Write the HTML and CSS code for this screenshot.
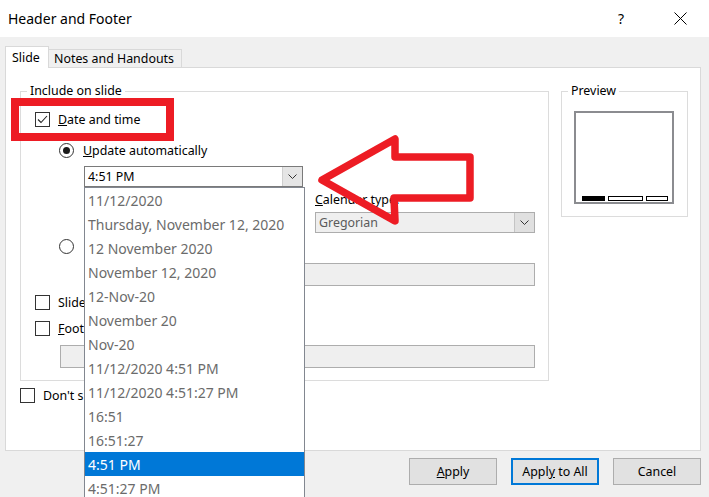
FILE: index.html
```html
<!DOCTYPE html>
<html>
    <head>
        <title>Header and Footer</title>
        <link rel="stylesheet" href="styles.css">
    </head>
    <body>
        <div class="titlebar">
            <span class="title">Header and Footer</span>
            <span class="title-btn">?</span>
            <span class="title-btn close">
                <svg width="13" height="13" viewBox="0 0 13 13"><path d="M0.5 0.5 L12.5 12.5 M12.5 0.5 L0.5 12.5" stroke="#000" stroke-width="1" fill="none"/></svg>
            </span>
        </div>

        <div class="tabs">
            <div class="tab active">Slide</div>
            <div class="tab">Notes and Handouts</div>
        </div>

        <div class="panel">
            <div class="panel-row">
                <fieldset class="group include">
                    <legend>Include on slide</legend>
                    <div class="group-body">
                        <div class="row row-dt">
                            <span class="checkbox"><svg width="13" height="13" viewBox="0 0 13 13"><path d="M2 6.5 L5 9.5 L11 3" stroke="#222" stroke-width="1.1" fill="none"/></svg></span>
                            <span class="label"><u>D</u>ate and time</span>
                        </div>
                        <div class="row row-ua indent">
                            <span class="radio on"></span>
                            <span class="label"><u>U</u>pdate automatically</span>
                        </div>
                        <div class="combo date-combo">
                            <span class="combo-text">4:51 PM</span>
                            <span class="combo-btn"><svg width="9" height="5" viewBox="0 0 9 5"><path d="M0.5 0.5 L4.5 4.5 L8.5 0.5" stroke="#333" fill="none"/></svg></span>
                            <ul class="dropdown">
                                <li>11/12/2020</li>
                                <li>Thursday, November 12, 2020</li>
                                <li>12 November 2020</li>
                                <li>November 12, 2020</li>
                                <li>12-Nov-20</li>
                                <li>November 20</li>
                                <li>Nov-20</li>
                                <li>11/12/2020 4:51 PM</li>
                                <li>11/12/2020 4:51:27 PM</li>
                                <li>16:51</li>
                                <li>16:51:27</li>
                                <li class="selected">4:51 PM</li>
                                <li>4:51:27 PM</li>
                            </ul>
                        </div>
                        <div class="lang-cal">
                            <div class="field-label"></div>
                            <div class="field-label"><u>C</u>alendar type:</div>
                            <div class="combo disabled">
                                <span class="combo-text"></span>
                                <span class="combo-btn"></span>
                            </div>
                            <div class="combo disabled">
                                <span class="combo-text">Gregorian</span>
                                <span class="combo-btn"><svg width="9" height="5" viewBox="0 0 9 5"><path d="M0.5 0.5 L4.5 4.5 L8.5 0.5" stroke="#333" fill="none"/></svg></span>
                            </div>
                        </div>
                        <div class="row row-fixed indent">
                            <span class="radio"></span>
                        </div>
                        <div class="textbox fixed-box"></div>
                        <div class="row row-sn">
                            <span class="checkbox"></span>
                            <span class="label">Slide</span>
                        </div>
                        <div class="row row-ft">
                            <span class="checkbox"></span>
                            <span class="label"><u>F</u>oot</span>
                        </div>
                        <div class="textbox footer-box"></div>
                    </div>
                </fieldset>

                <fieldset class="group preview">
                    <legend>Preview</legend>
                    <div class="thumb">
                        <span class="bar filled"></span>
                        <span class="bar wide"></span>
                        <span class="bar"></span>
                    </div>
                </fieldset>
            </div>

            <div class="row row-ds">
                <span class="checkbox"></span>
                <span class="label">Don't s</span>
            </div>
        </div>

        <div class="buttons">
            <button type="button" class="btn"><u>A</u>pply</button>
            <button type="button" class="btn default">Appl<u>y</u> to All</button>
            <button type="button" class="btn">Cancel</button>
        </div>

        <!-- annotations drawn over the dialog -->
        <div class="red-box"></div>
        <svg class="arrow" width="709" height="497" viewBox="0 0 709 497">
            <polygon points="322,180 395,139 395,157 470,157 470,198 394,198 395,221" fill="none" stroke="#ed1c24" stroke-width="7.5" stroke-linejoin="round"/>
        </svg>
    </body>
</html>
```

FILE: styles.css
```css
* {
    box-sizing: border-box;
}

body {
    margin: 0;
    width: 709px;
    height: 497px;
    overflow: hidden;
    position: relative;
    background: #f0f0f0;
    font-family: "Noto Sans", "Open Sans", sans-serif;
    font-size: 12.4px;
    color: #000;
}

.titlebar {
    height: 37px;
    background: #fff;
    display: flex;
    align-items: center;
    padding-left: 8px;
}
.title {
    flex: 1;
    font-size: 14px;
}
.title-btn {
    width: 20px;
    text-align: center;
    font-size: 14px;
    margin-right: 39px;
}
.title-btn.close {
    margin-right: 19px;
    display: flex;
    justify-content: center;
}

.tabs {
    display: flex;
    align-items: flex-end;
    height: 21px;
    margin: 9px 0 0 5px;
    position: relative;
    z-index: 1;
}
.tab {
    height: 18px;
    width: 133px;
    padding-left: 5px;
    line-height: 17px;
    background: #f0f0f0;
    border: 1px solid #d9d9d9;
    border-left: none;
    border-bottom: none;
}
.tab.active {
    width: 44px;
    height: 22px;
    margin-bottom: -1px;
    padding-left: 6px;
    line-height: 21px;
    background: #fff;
    border-left: 1px solid #d9d9d9;
}

.panel {
    margin-left: 5px;
    width: 696px;
    height: 384px;
    background: #fff;
    border: 1px solid #d9d9d9;
    padding: 15px 0 0 14px;
}
.panel-row {
    display: flex;
    align-items: flex-start;
    gap: 12px;
}

fieldset.group {
    margin: 0;
    padding: 0;
    min-width: 0;
    border: 1px solid #dcdcdc;
}
fieldset.group legend {
    margin-left: 6px;
    padding: 0 3px;
    line-height: 16px;
}
.include {
    width: 529px;
}
.group-body {
    padding: 0 0 12px 14px;
}

.row {
    display: flex;
    align-items: center;
    height: 20px;
}
.indent {
    padding-left: 24px;
}
.row-dt { margin-top: 10px; }
.row-ua { margin-top: 11px; }
.row-fixed { margin-top: 3px; }
.row-sn { margin-top: 6px; }
.row-ft { margin-top: 6px; }
.row-ds { margin-top: 4px; }

.checkbox {
    width: 15px;
    height: 15px;
    border: 1px solid #333;
    background: #fff;
    margin-right: 8px;
    display: flex;
    align-items: center;
    justify-content: center;
    flex: none;
}
.radio {
    width: 15px;
    height: 15px;
    border: 1px solid #333;
    border-radius: 50%;
    margin-right: 9px;
    position: relative;
    flex: none;
}
.radio.on::after {
    content: "";
    position: absolute;
    left: 3px;
    top: 3px;
    width: 7px;
    height: 7px;
    border-radius: 50%;
    background: #1a1a1a;
}

.combo {
    display: flex;
    height: 21px;
    border: 1px solid #7a7a7a;
    background: #fff;
}
.combo-text {
    flex: 1;
    padding-left: 3px;
    line-height: 19px;
    white-space: nowrap;
    overflow: hidden;
}
.combo-btn {
    width: 20px;
    background: #e5e5e5;
    border-left: 1px solid #cfcfcf;
    display: flex;
    align-items: center;
    justify-content: center;
}
.combo.disabled {
    border-color: #adadad;
    background: #efefef;
    color: #5a5a5a;
}
.combo.disabled .combo-btn {
    background: #e0e0e0;
    border-left-color: #c4c4c4;
}

.date-combo {
    position: relative;
    width: 219px;
    margin: 6px 0 0 49px;
}

.dropdown {
    position: absolute;
    top: 20px;
    left: -1px;
    width: 221px;
    margin: 0;
    padding: 0;
    list-style: none;
    background: #fff;
    border: 1px solid #828790;
    z-index: 5;
    font-size: 14px;
    color: #6b6b6b;
}
.dropdown li {
    height: 24px;
    line-height: 25px;
    padding-left: 3px;
    white-space: nowrap;
}
.dropdown li.selected {
    background: #0078d7;
    color: #fff;
}

.lang-cal {
    display: grid;
    grid-template-columns: 220px 220px;
    column-gap: 11px;
    margin-left: 49px;
}
.field-label {
    margin-top: 5px;
    height: 16px;
    line-height: 16px;
}
.lang-cal .combo {
    margin-top: 4px;
}

.textbox {
    height: 23px;
    border: 1px solid #adadad;
    background: #efefef;
    margin-top: 7px;
}
.fixed-box {
    margin-left: 49px;
    width: 451px;
}
.footer-box {
    margin-left: 25px;
    width: 475px;
}

.preview {
    width: 127px;
}
.thumb {
    width: 100px;
    height: 93px;
    margin: 12px 0 12px 12px;
    border: 2px solid #8b8c90;
    display: flex;
    align-items: flex-end;
    gap: 3px;
    padding: 0 4px 1px 6px;
}
.bar {
    height: 5px;
    width: 22px;
    border: 1px solid #000;
    background: #fff;
}
.bar.filled {
    width: 23px;
    background: #000;
}
.bar.wide {
    width: 35px;
}

.buttons {
    display: flex;
    justify-content: flex-end;
    gap: 14px;
    margin-top: 7px;
    padding-right: 8px;
}
.btn {
    width: 88px;
    height: 27px;
    font-family: inherit;
    font-size: 12.4px;
    color: #000;
    background: #e1e1e1;
    border: 1px solid #adadad;
    padding: 0;
}
.btn.default {
    border: 2px solid #0078d7;
}

.red-box {
    position: absolute;
    left: 11px;
    top: 98px;
    width: 163px;
    height: 43px;
    border: 8px solid #ed1c24;
}
.arrow {
    position: absolute;
    left: 0;
    top: 0;
    pointer-events: none;
}
```
